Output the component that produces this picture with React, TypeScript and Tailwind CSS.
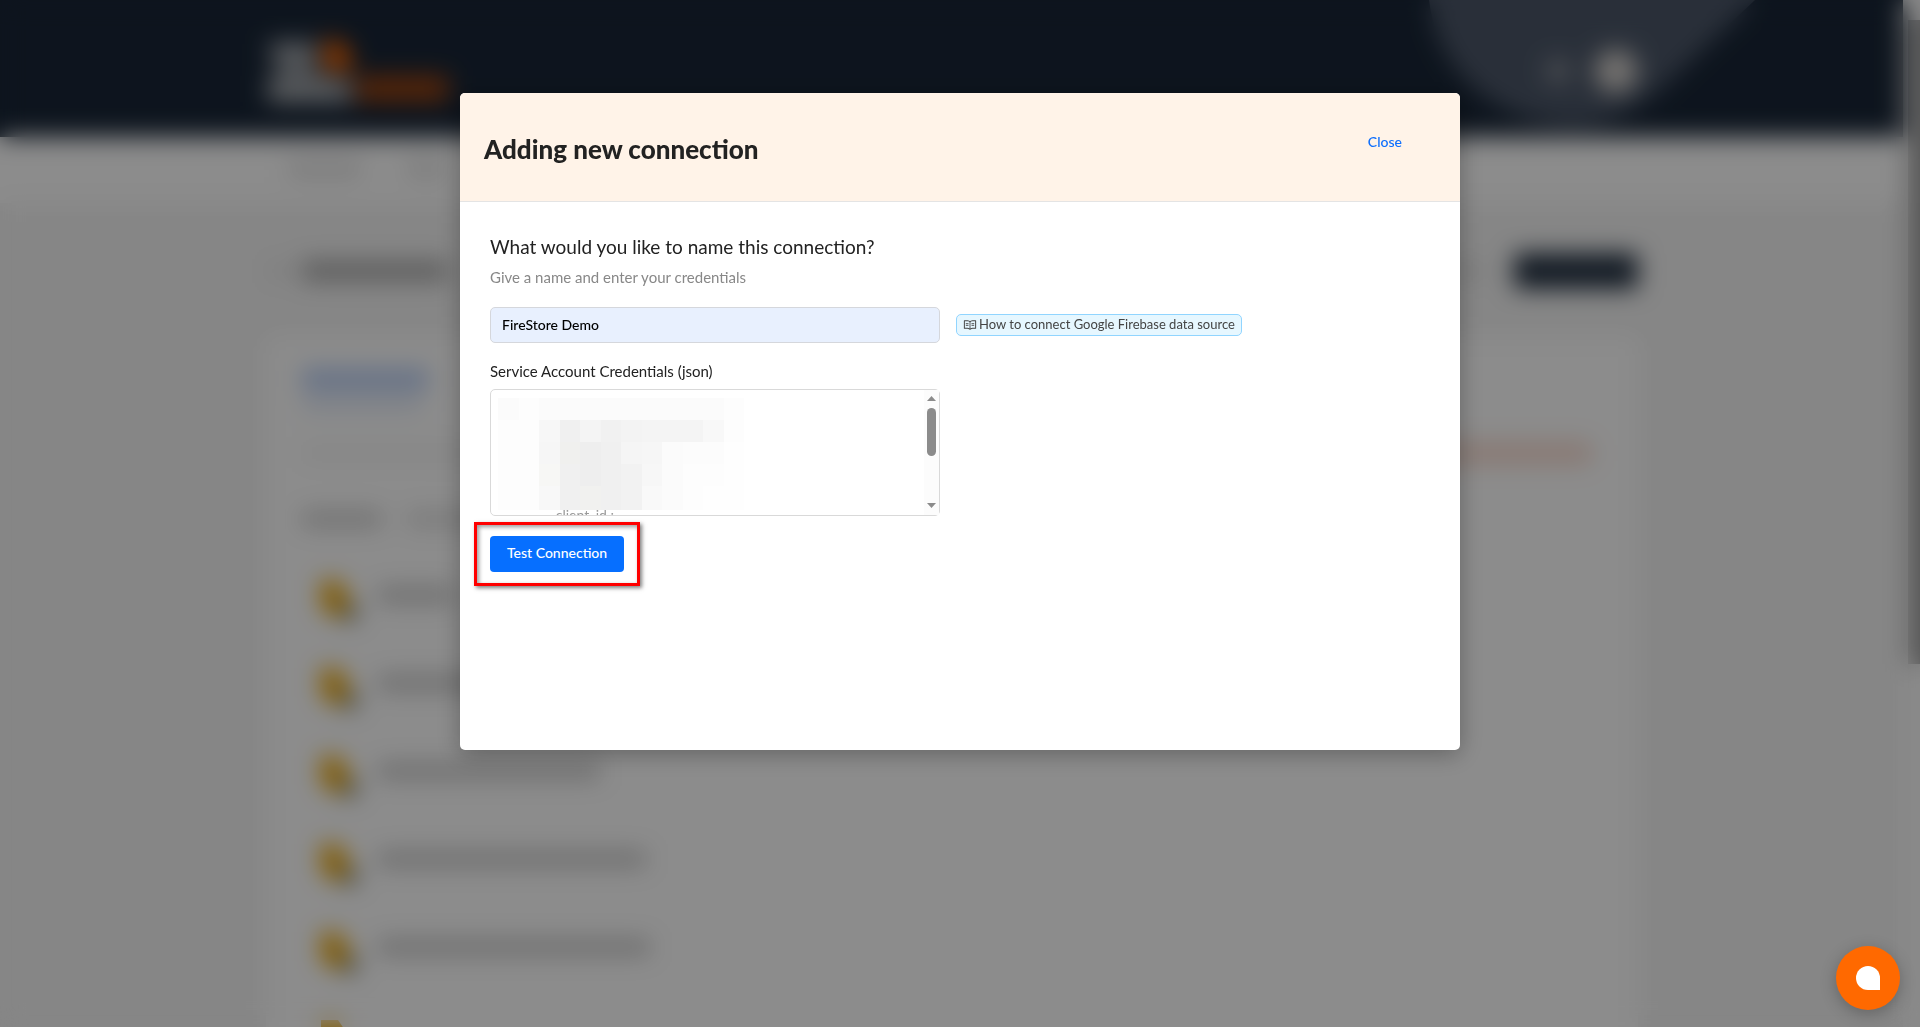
import React from "react";
import { AiOutlineRead } from "react-icons/ai";

const ROWS = ["w-[76px]", "w-[210px]", "w-[222px]", "w-[268px]", "w-[272px]", "w-[272px]"];

const MOSAIC: string[][] = [
  ["#fbfbfb", "#fdfdfd", "#fbfbfb", "#fbfbfb", "#fbfbfb", "#fbfbfb", "#fbfbfb", "#fbfbfb", "#fbfbfb", "#fbfbfb", "#fbfbfb", "#fdfdfd"],
  ["#fdfdfd", "#fdfdfd", "#f7f7f7", "#f0f0f0", "#f4f4f4", "#f1f1f1", "#f3f3f3", "#f4f4f4", "#f4f4f4", "#f4f4f4", "#f8f8f8", "#fdfdfd"],
  ["#fdfdfd", "#fdfdfd", "#f6f6f6", "#f0f0ee", "#eeeeee", "#f0f0f0", "#f5f5f5", "#f6f6f6", "#fbfbfb", "#fcfcfc", "#fcfcfc", "#fefefe"],
  ["#fdfdfd", "#fdfdfd", "#f7f7f5", "#f0f0f0", "#eeeeee", "#f0f0f0", "#f2f2f2", "#f7f7f7", "#fbfbfb", "#fdfdfd", "#fdfdfd", "#fefefe"],
  ["#fdfdfd", "#fdfdfd", "#f8f8f8", "#f0f0f0", "#f1f1ef", "#f0f0f0", "#f2f2f2", "#f9f9f9", "#fbfbfb", "#fdfdfd", "#fefefe", "#fefefe"],
];

const CREDENTIALS = "\n\n\n\n\n" + " ".repeat(15) + "client_id :";

function SourceIcon() {
  return (
    <svg width="44" height="48" viewBox="0 0 44 48">
      <path d="M7 3h17l11 16-3 21H20L7 31z" fill="#eda705" />
      <circle cx="36" cy="36" r="8" fill="#6c7168" />
    </svg>
  );
}

function HeaderLogo() {
  return (
    <svg width="186" height="64" viewBox="0 0 186 64">
      <path d="M4 3h46v30H12V22H4z" fill="#a0a4a9" />
      <path d="M2 37h50l34 6v20H2z" fill="#a9adb1" />
      <path d="M58 1h14l13 13v18H58z" fill="#ff6900" />
      <rect x="90" y="37" width="92" height="25" fill="#a0450f" />
    </svg>
  );
}

function Backdrop() {
  return (
    <div aria-hidden="true" className="flex h-full overflow-hidden bg-[#f4f4f4]">
      <div className="min-w-0 flex-1">
        <header className="relative h-[137px] bg-[#192637]">
          <svg className="absolute top-0 right-[130px]" width="350" height="135" viewBox="0 0 350 135">
            <path d="M6 0C14 72 76 124 150 125c40 0 72-22 98-46L332 0z" fill="#4c5769" />
          </svg>
          <div className="relative mx-auto flex max-w-[1372px] items-center justify-between pt-[39px]">
            <HeaderLogo />
            <div className="flex items-center gap-6">
              <div className="size-6 rounded-full bg-[#8f939b]" />
              <div className="size-11 rounded-full bg-[#d4d0cc]" />
            </div>
          </div>
        </header>
        <nav className="h-[66px] bg-white">
          <div className="mx-auto flex max-w-[1328px] gap-11 pt-6">
            <div className="h-4 w-[74px] bg-[#e0e0e0]" />
            <div className="h-4 w-[40px] bg-[#e0e0e0]" />
          </div>
        </nav>
        <div className="mx-auto max-w-[1372px]">
          <div className="flex items-center pt-[50px]">
            <div className="ml-1 h-3 w-4 bg-[#dadada]" />
            <div className="ml-4 h-5 w-[146px] bg-[#a8a8a8]" />
            <div className="mr-7 ml-auto h-3 w-[40px] bg-[#dcdcdc]" />
            <div className="h-9 w-[124px] rounded bg-[#233142]" />
          </div>
          <main className="mt-12 min-h-screen rounded-lg bg-white px-9 pt-8">
            <div className="h-[20px] w-[126px] bg-[#b4cbf4]" />
            <div className="mt-2 h-[14px] w-[120px] bg-[#e0e8f7]" />
            <div className="flex h-[84px] items-center justify-between">
              <div className="h-4 w-[400px] bg-[#f3f3f3]" />
              <div className="mr-2 h-6 w-[190px] rounded-full bg-[#f9ddd2]" />
            </div>
            <div className="flex gap-6 pt-4 pb-[30px]">
              <div className="h-4 w-[80px] bg-[#cccccc]" />
              <div className="h-4 w-[200px] bg-[#dedede]" />
            </div>
            {ROWS.map((w, i) => (
              <div key={i} className="flex h-22 items-center gap-5 px-3">
                <SourceIcon />
                <div className={`mb-3 h-4 bg-[#c6c6c6] ${w}`} />
              </div>
            ))}
          </main>
        </div>
      </div>
      <div className="w-[17px] shrink-0 bg-[#fafafa] pt-5 pl-[5px]">
        <div className="h-[644px] bg-[#a0a0a0]" />
      </div>
    </div>
  );
}

function Mosaic() {
  return (
    <svg className="pointer-events-none absolute top-[9px] left-2" width="246" height="114" viewBox="0 0 246 114" shapeRendering="crispEdges">
      {MOSAIC.map((row, y) =>
        row.map((color, x) => (
          <rect key={`${x}-${y}`} x={x * 20.5} y={y * 22} width="20.6" height={y === 4 ? 24 : 22} fill={color} />
        ))
      )}
    </svg>
  );
}

function FieldScrollbar() {
  return (
    <svg className="pointer-events-none absolute top-px right-px" width="15" height="125" viewBox="0 0 15 125">
      <rect width="15" height="125" fill="#fcfcfc" />
      <path d="M7.5 6 12 11H3z" fill="#8b8b8b" />
      <rect x="3" y="18" width="9" height="48" rx="4.5" fill="#8b8b8b" />
      <path d="M7.5 118 12 113H3z" fill="#8b8b8b" />
    </svg>
  );
}

export default function App() {
  return (
    <div className="relative h-screen overflow-hidden font-['Lato',sans-serif] text-[#222222]">
      <Backdrop />
      <div className="absolute inset-0 flex items-start justify-center bg-black/45 pt-[93px] backdrop-blur-[12px]">
        <section
          role="dialog"
          aria-modal="true"
          aria-labelledby="dialog-title"
          className="min-h-[657px] w-full max-w-[1000px] overflow-hidden rounded-[5px] bg-white shadow-[0_4px_24px_rgba(0,0,0,0.3)]"
        >
          <header className="flex h-[109px] items-start justify-between border-b border-[#e4e4e4] bg-[#fff3e8] pr-[58px] pl-6">
            <h1 id="dialog-title" className="pt-10 text-[26px] leading-8 font-black">
              Adding new connection
            </h1>
            <button type="button" className="pt-[39px] text-sm leading-5 font-medium text-[#0d6efd]">
              Close
            </button>
          </header>
          <form className="px-[30px] pt-[31px]" onSubmit={(e) => e.preventDefault()}>
            <h2 className="text-[19px] leading-7 text-[#222222]">What would you like to name this connection?</h2>
            <p className="mt-1 text-[15px] leading-6 text-[#888888]">Give a name and enter your credentials</p>
            <div className="mt-[18px] flex items-center gap-4">
              <input
                aria-label="Connection name"
                defaultValue="FireStore Demo"
                className="h-9 w-[450px] rounded-[5px] border border-[#d5d7dc] bg-[#e8f0fe] px-[11px] pb-[2px] text-sm font-medium text-black outline-none"
              />
              <a href="#help" className="flex h-[22px] items-center gap-[2px] rounded-[5px] border border-[#91d5ff] bg-[#e6f7ff] px-[6px] text-[13px] text-[#444444]">
                <AiOutlineRead size={14} />
                How to connect Google Firebase data source
              </a>
            </div>
            <label htmlFor="credentials" className="mt-4 block text-[15px] leading-6">
              Service Account Credentials (json)
            </label>
            <div className="relative mt-[6px] h-[127px] w-[450px]">
              <textarea
                id="credentials"
                defaultValue={CREDENTIALS}
                className="block size-full resize-none overflow-hidden rounded-[5px] border border-[#d9d9d9] bg-white px-[11px] py-1 text-sm leading-[22px] text-[#999999] outline-none"
              />
              <Mosaic />
              <FieldScrollbar />
            </div>
            <div className="relative mt-5 w-fit">
              <div className="pointer-events-none absolute -inset-x-4 -inset-y-[14px] border-3 border-[#ff0000] shadow-[2px_2px_4px_rgba(0,0,0,0.5),inset_2px_2px_4px_rgba(0,0,0,0.4)]" />
              <button type="button" className="relative h-9 rounded bg-[#066fff] px-[17px] pb-[2px] text-sm font-medium text-white">
                Test Connection
              </button>
            </div>
          </form>
        </section>
      </div>
      <button
        type="button"
        aria-label="Open chat"
        className="absolute right-5 bottom-[17px] flex size-16 items-center justify-center rounded-full bg-[#ff6900] shadow-[0_4px_16px_rgba(0,0,0,0.25)]"
      >
        <span className="size-6 rounded-full rounded-br-none bg-white" />
      </button>
    </div>
  );
}
